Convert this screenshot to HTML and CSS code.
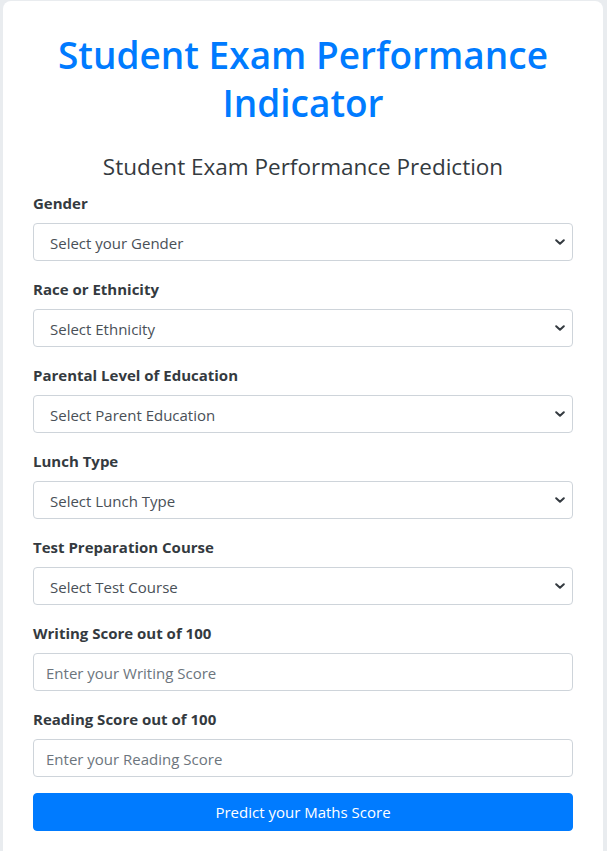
FILE: index.html
```html
<!DOCTYPE html>
<html lang="en">
<head>
<meta charset="utf-8">
<title>Student Exam Performance Indicator</title>
<link rel="stylesheet" href="styles.css">
</head>
<body>
<div class="container">
  <div class="card">
    <h1 class="title">Student Exam Performance Indicator</h1>
    <form class="form">
      <h3 class="subtitle">Student Exam Performance Prediction</h3>

      <div class="group">
        <label class="label">Gender</label>
        <div class="select-wrap">
          <select class="control select"><option>Select your Gender</option></select>
          <svg class="chev" viewBox="0 0 10 6" width="10" height="6"><path d="M1.2 1.2 L5 4.8 L8.8 1.2" fill="none" stroke="#343a40" stroke-width="2" stroke-linecap="round" stroke-linejoin="round"/></svg>
        </div>
      </div>

      <div class="group">
        <label class="label">Race or Ethnicity</label>
        <div class="select-wrap">
          <select class="control select"><option>Select Ethnicity</option></select>
          <svg class="chev" viewBox="0 0 10 6" width="10" height="6"><path d="M1.2 1.2 L5 4.8 L8.8 1.2" fill="none" stroke="#343a40" stroke-width="2" stroke-linecap="round" stroke-linejoin="round"/></svg>
        </div>
      </div>

      <div class="group">
        <label class="label">Parental Level of Education</label>
        <div class="select-wrap">
          <select class="control select"><option>Select Parent Education</option></select>
          <svg class="chev" viewBox="0 0 10 6" width="10" height="6"><path d="M1.2 1.2 L5 4.8 L8.8 1.2" fill="none" stroke="#343a40" stroke-width="2" stroke-linecap="round" stroke-linejoin="round"/></svg>
        </div>
      </div>

      <div class="group">
        <label class="label">Lunch Type</label>
        <div class="select-wrap">
          <select class="control select"><option>Select Lunch Type</option></select>
          <svg class="chev" viewBox="0 0 10 6" width="10" height="6"><path d="M1.2 1.2 L5 4.8 L8.8 1.2" fill="none" stroke="#343a40" stroke-width="2" stroke-linecap="round" stroke-linejoin="round"/></svg>
        </div>
      </div>

      <div class="group">
        <label class="label">Test Preparation Course</label>
        <div class="select-wrap">
          <select class="control select"><option>Select Test Course</option></select>
          <svg class="chev" viewBox="0 0 10 6" width="10" height="6"><path d="M1.2 1.2 L5 4.8 L8.8 1.2" fill="none" stroke="#343a40" stroke-width="2" stroke-linecap="round" stroke-linejoin="round"/></svg>
        </div>
      </div>

      <div class="group">
        <label class="label">Writing Score out of 100</label>
        <input class="control" type="number" placeholder="Enter your Writing Score">
      </div>

      <div class="group">
        <label class="label">Reading Score out of 100</label>
        <input class="control" type="number" placeholder="Enter your Reading Score">
      </div>

      <div class="group">
        <button class="btn" type="button">Predict your Maths Score</button>
      </div>
    </form>
  </div>
</div>
</body>
</html>
```
FILE: styles.css
```css
* { box-sizing: border-box; }

html, body {
  margin: 0;
  padding: 0;
}

body {
  background: #e9ecef;
  font-family: "Open Sans", "Noto Sans", "DejaVu Sans", sans-serif;
  font-size: 16px;
  line-height: 1.5;
  color: #212529;
  padding: 0 4px 0 3px;
}

.container {
  max-width: 600px;
  margin: 1px auto 0;
}

.card {
  background: #ffffff;
  border-radius: 8px;
  padding: 30px;
  min-height: 900px;
}

.title {
  margin: 0 0 25px;
  font-size: 37px;
  font-weight: 600;
  line-height: 48px;
  color: #007bff;
  text-align: center;
}

.subtitle {
  margin: 0 0 10px;
  font-size: 22.5px;
  font-weight: 400;
  line-height: 29px;
  color: #343a40;
  text-align: center;
}

.group {
  margin-bottom: 16px;
}

.label {
  display: block;
  margin-bottom: 8px;
  font-size: 15px;
  font-weight: 700;
  line-height: 24px;
  color: #343a40;
}

.control {
  display: block;
  width: 100%;
  height: 38px;
  padding: 7px 12px 5px;
  font-family: inherit;
  font-size: 15px;
  line-height: 24px;
  color: #495057;
  background: #ffffff;
  border: 1px solid #ced4da;
  border-radius: 4px;
  outline: none;
}

.control::placeholder {
  color: #6c757d;
  opacity: 1;
}

.select-wrap {
  position: relative;
}

.select {
  -webkit-appearance: none;
  appearance: none;
  padding-left: 16px;
}

.chev {
  position: absolute;
  right: 8px;
  top: 16px;
  pointer-events: none;
}

.btn {
  display: block;
  width: 100%;
  height: 38px;
  padding: 6px 12px;
  font-family: inherit;
  font-size: 15px;
  line-height: 24px;
  color: #ffffff;
  background: #007bff;
  border: 1px solid #007bff;
  border-radius: 4px;
}
```
